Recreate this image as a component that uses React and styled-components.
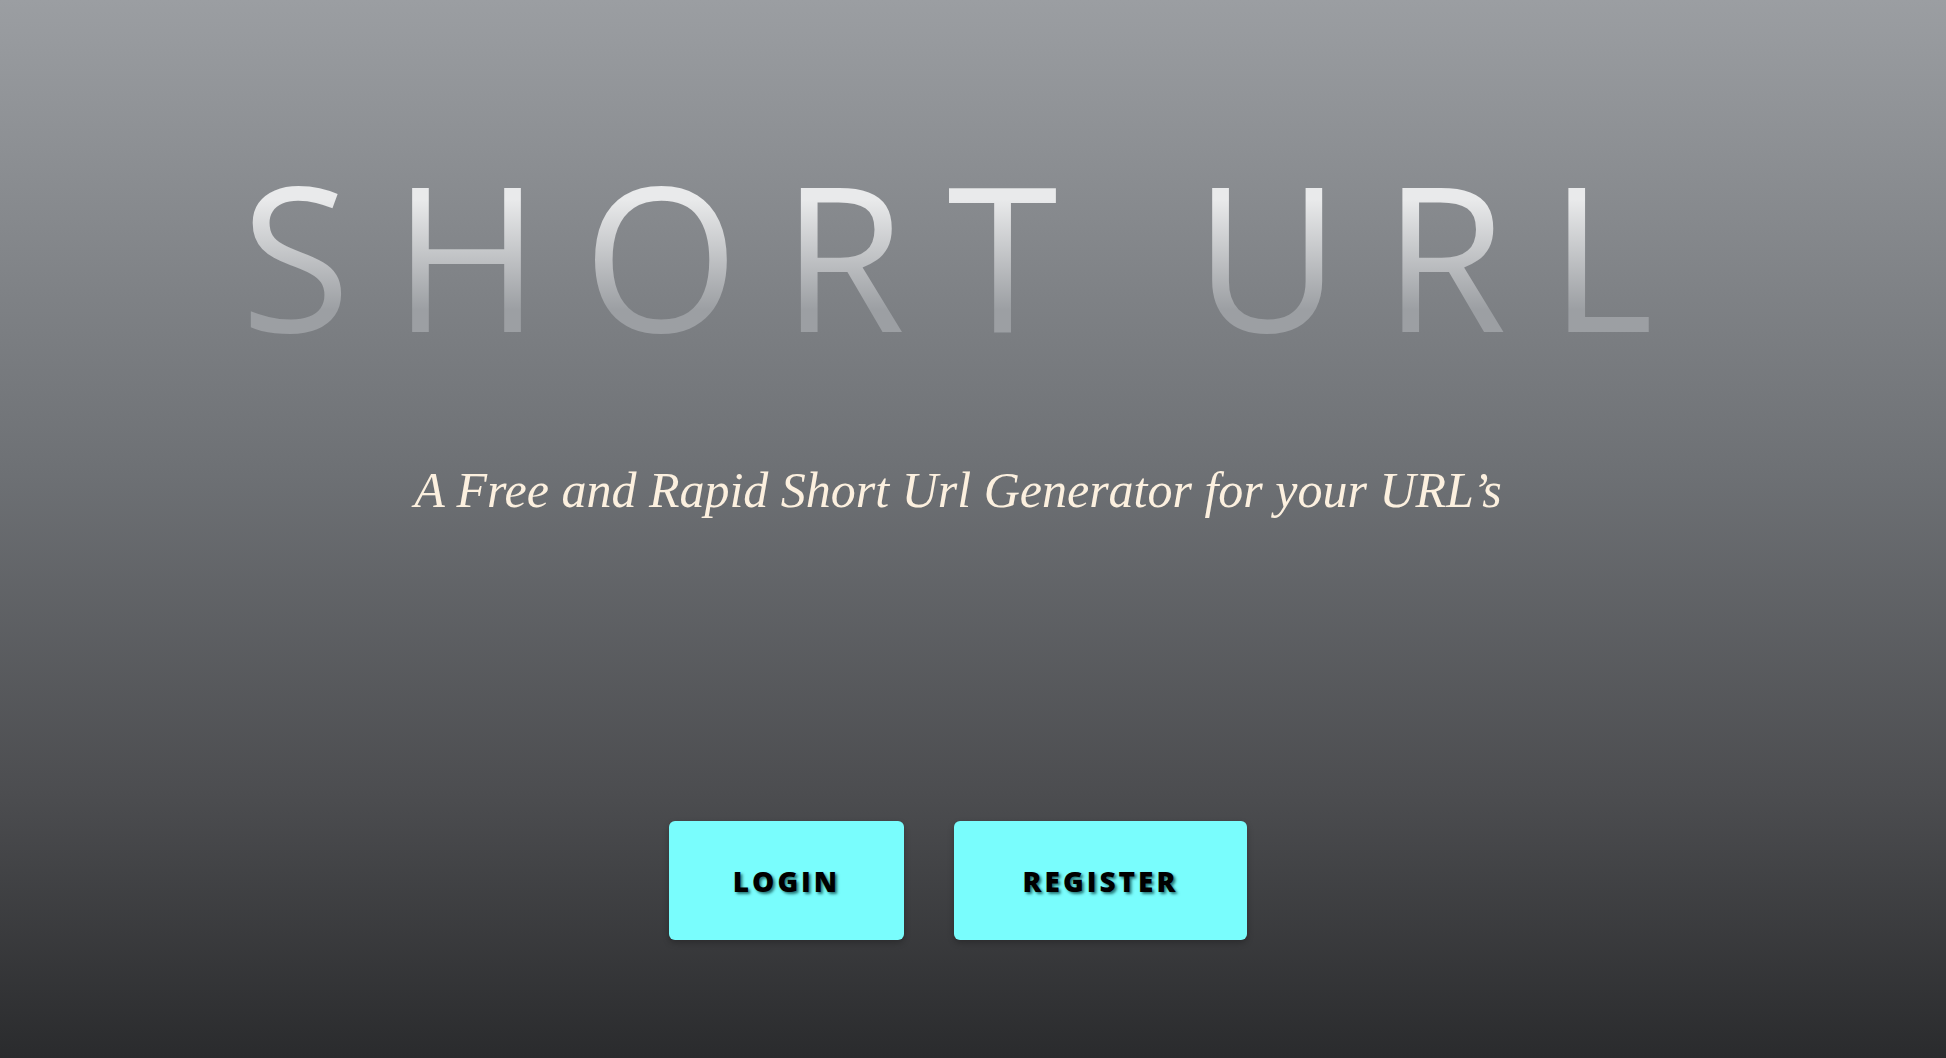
import styled, { createGlobalStyle } from "styled-components";

const GlobalStyle = createGlobalStyle`
  html, body {
    margin: 0;
    padding: 0;
  }
  body {
    font-family: "Open Sans", "Liberation Sans", sans-serif;
  }
`;

const Page = styled.div`
  min-height: 1058px;
  background: linear-gradient(to bottom, #9b9ea2 0%, #6d7074 45%, #4c4d50 75%, #2a2b2d 100%);
  display: flex;
  flex-direction: column;
  align-items: center;
  box-sizing: border-box;
  padding: 144px 30px 0 0;
`;

const Title = styled.h1`
  margin: 0;
  font-family: "Open Sans", sans-serif;
  font-weight: 500;
  font-size: 201px;
  line-height: 1.1;
  letter-spacing: 42px;
  padding-left: 20px;
  background: linear-gradient(to bottom, #e9eaeb 25%, #9c9fa3 75%);
  -webkit-background-clip: text;
  background-clip: text;
  color: transparent;
`;

const Tagline = styled.p`
  margin: 96px 0 0;
  font-family: "Liberation Serif", serif;
  font-style: italic;
  font-size: 50px;
  color: #fcf0df;
`;

const Buttons = styled.div`
  display: flex;
  gap: 50px;
  margin-top: 302px;
`;

const Button = styled.button`
  width: ${(p) => p.$w}px;
  height: 119px;
  border: none;
  border-radius: 6px;
  background: #79fdfd;
  box-shadow: 0 3px 6px rgba(0, 0, 0, 0.25);
  font-family: "Open Sans", sans-serif;
  font-weight: 800;
  font-size: 28px;
  letter-spacing: 3px;
  color: #000;
  text-shadow: 2px 2px 3px rgba(0, 60, 60, 0.7);
  cursor: pointer;
`;

export default function App() {
  return (
    <>
      <GlobalStyle />
      <Page>
        <Title>SHORT URL</Title>
        <Tagline>A Free and Rapid Short Url Generator for your URL’s</Tagline>
        <Buttons>
          <Button $w={235}>LOGIN</Button>
          <Button $w={293}>REGISTER</Button>
        </Buttons>
      </Page>
    </>
  );
}
